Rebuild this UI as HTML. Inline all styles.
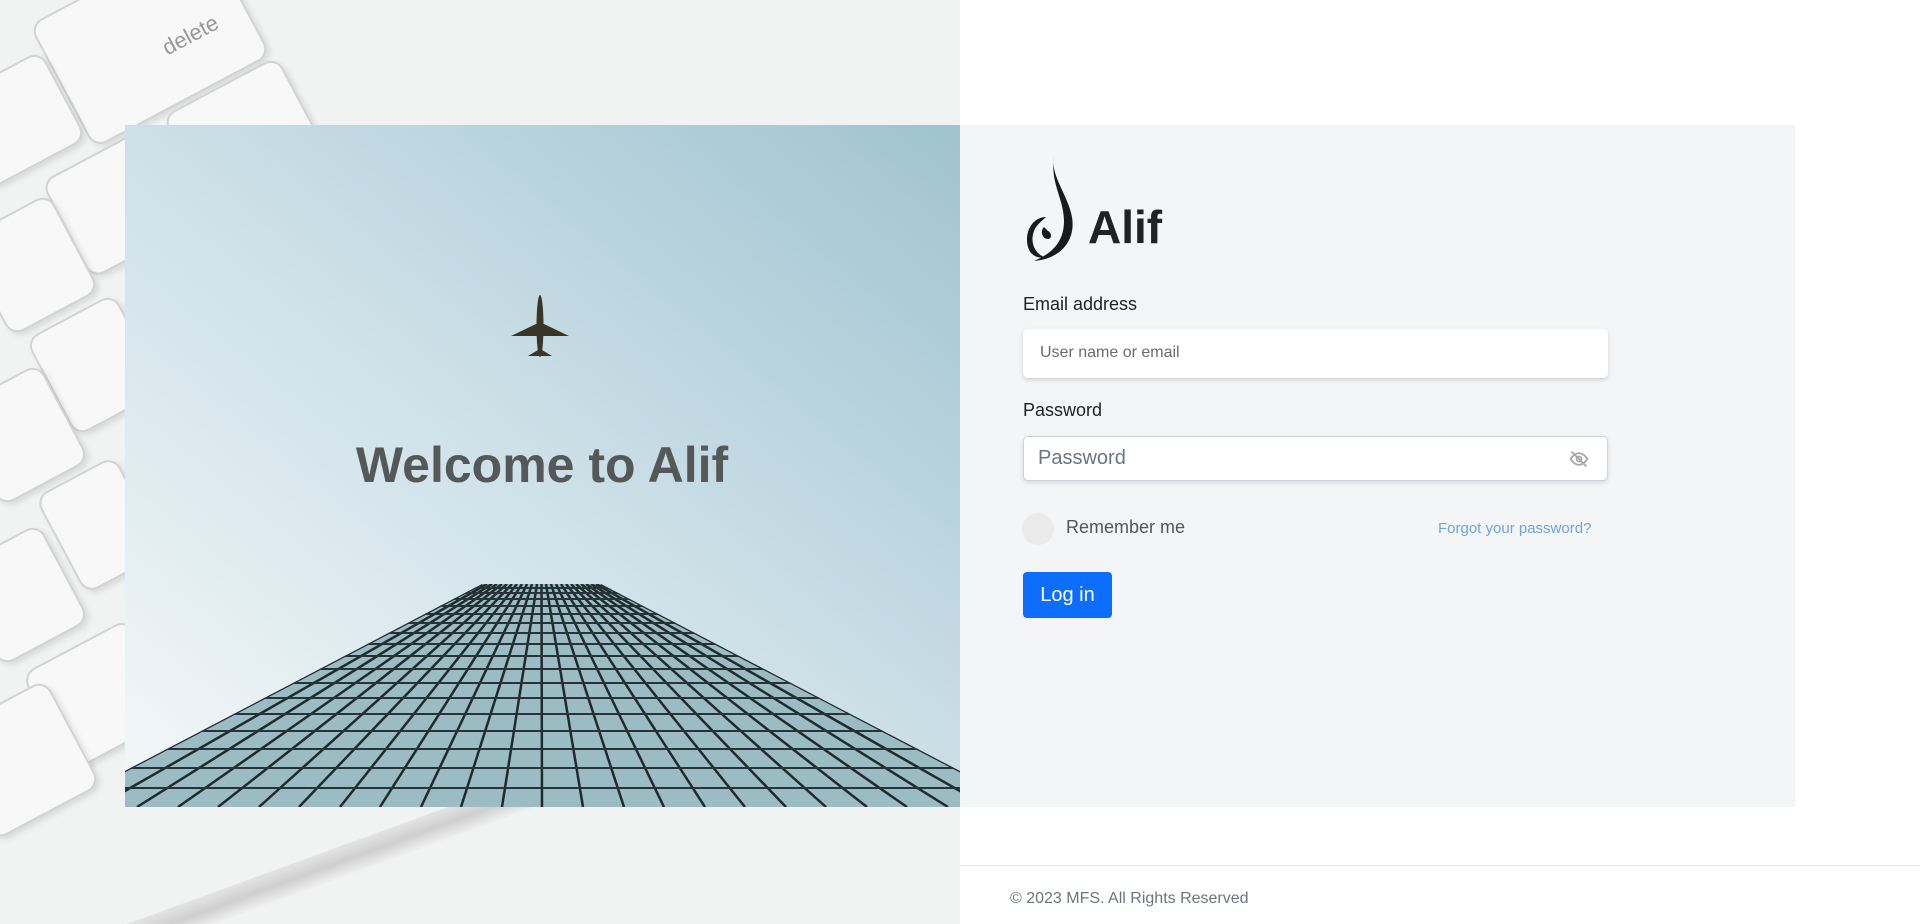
<!DOCTYPE html>
<html><head><meta charset="utf-8">
<style>
*{margin:0;padding:0;box-sizing:border-box}
html,body{width:1920px;height:924px;overflow:hidden}
body{background:#fff;font-family:"Liberation Sans",sans-serif;position:relative}
.left{position:absolute;left:0;top:0;width:960px;height:924px;background:#f1f2f2;overflow:hidden}
.key{position:absolute;background:#f8f8f8;border:2px solid #d2d4d4;border-radius:14px;box-shadow:2px 4px 6px rgba(0,0,0,.10)}
.photo{position:absolute;left:125px;top:125px;width:835px;height:682px}
.panel{position:absolute;left:960px;top:125px;width:835px;height:682px;background:#f4f5f7}
.lbl{position:absolute;left:1023px;font-size:18px;color:#222}
.inp{position:absolute;left:1023px;width:585px;background:#fff;border-radius:5px}
.footer{position:absolute;left:960px;top:865px;width:960px;border-top:1px solid #e6e6e6;height:58px}
</style></head><body>
<div class="left">
  <div class="key" style="left:50px;top:-30px;width:200px;height:140px;transform:rotate(-28deg)"><span style="position:absolute;right:30px;bottom:40px;color:#999;font-size:22px">delete</span></div>
  <div class="key" style="left:-40px;top:70px;width:110px;height:100px;transform:rotate(-28deg)"></div>
  <div class="key" style="left:180px;top:80px;width:130px;height:110px;transform:rotate(-28deg)"></div>
  <div class="key" style="left:60px;top:150px;width:110px;height:110px;transform:rotate(-28deg)"></div>
  <div class="key" style="left:-20px;top:210px;width:100px;height:110px;transform:rotate(-28deg)"></div>
  <div class="key" style="left:45px;top:310px;width:100px;height:110px;transform:rotate(-28deg)"></div>
  <div class="key" style="left:-30px;top:380px;width:100px;height:110px;transform:rotate(-28deg)"></div>
  <div class="key" style="left:55px;top:470px;width:90px;height:110px;transform:rotate(-28deg)"></div>
  <div class="key" style="left:-30px;top:540px;width:100px;height:110px;transform:rotate(-28deg)"></div>
  <div class="key" style="left:40px;top:640px;width:120px;height:110px;transform:rotate(-28deg)"></div>
  <div class="key" style="left:-40px;top:700px;width:120px;height:120px;transform:rotate(-28deg)"></div>
  <div style="position:absolute;left:60px;top:840px;width:600px;height:30px;background:linear-gradient(#e4e4e4,#cfcfcf,#f0f0f0);transform:rotate(-20deg)"></div>
</div>
<svg class="photo" viewBox="0 0 835 682">
<defs>
<linearGradient id="sky" x1="1" y1="0" x2="0" y2="1">
<stop offset="0" stop-color="#9fc3d0"/><stop offset="0.5" stop-color="#cde0e8"/><stop offset="1" stop-color="#f4f8fa"/></linearGradient>
<clipPath id="bld"><polygon points="357,459 476,459 904,682 -69,682"/></clipPath>
</defs>
<rect width="835" height="682" fill="url(#sky)"/>
<g clip-path="url(#bld)">
<rect x="-69" y="459" width="980" height="223" fill="#9bbcc3"/>
<g stroke="#1f2a2d" stroke-width="2.5">
<line x1="357" y1="459" x2="-69" y2="682"/><line x1="362" y1="459" x2="-28" y2="682"/><line x1="367" y1="459" x2="12" y2="682"/><line x1="372" y1="459" x2="53" y2="682"/><line x1="377" y1="459" x2="93" y2="682"/><line x1="382" y1="459" x2="134" y2="682"/><line x1="387" y1="459" x2="174" y2="682"/><line x1="392" y1="459" x2="215" y2="682"/><line x1="397" y1="459" x2="255" y2="682"/><line x1="402" y1="459" x2="296" y2="682"/><line x1="407" y1="459" x2="336" y2="682"/><line x1="412" y1="459" x2="377" y2="682"/><line x1="416.5" y1="459" x2="417" y2="682"/><line x1="421" y1="459" x2="458" y2="682"/><line x1="426" y1="459" x2="499" y2="682"/><line x1="431" y1="459" x2="539" y2="682"/><line x1="436" y1="459" x2="580" y2="682"/><line x1="441" y1="459" x2="620" y2="682"/><line x1="446" y1="459" x2="661" y2="682"/><line x1="451" y1="459" x2="701" y2="682"/><line x1="456" y1="459" x2="742" y2="682"/><line x1="461" y1="459" x2="782" y2="682"/><line x1="466" y1="459" x2="823" y2="682"/><line x1="471" y1="459" x2="863" y2="682"/><line x1="476" y1="459" x2="904" y2="682"/>
</g>
<g stroke="#26343a" stroke-width="2">
<line x1="-69" x2="904" y1="463" y2="463"/><line x1="-69" x2="904" y1="468" y2="468"/><line x1="-69" x2="904" y1="474" y2="474"/><line x1="-69" x2="904" y1="481" y2="481"/><line x1="-69" x2="904" y1="489" y2="489"/><line x1="-69" x2="904" y1="498" y2="498"/><line x1="-69" x2="904" y1="508" y2="508"/><line x1="-69" x2="904" y1="519" y2="519"/><line x1="-69" x2="904" y1="531" y2="531"/><line x1="-69" x2="904" y1="544" y2="544"/><line x1="-69" x2="904" y1="558" y2="558"/><line x1="-69" x2="904" y1="573" y2="573"/><line x1="-69" x2="904" y1="589" y2="589"/><line x1="-69" x2="904" y1="606" y2="606"/><line x1="-69" x2="904" y1="624" y2="624"/><line x1="-69" x2="904" y1="643" y2="643"/><line x1="-69" x2="904" y1="663" y2="663"/>
</g>
</g>
<g fill="#3a3526" transform="translate(415,201)">
<ellipse cx="0" cy="0" rx="3.5" ry="31"/>
<polygon points="-29,10 29,10 4,-2 -4,-2"/>
<polygon points="-12,30 12,30 2,24 -2,24"/>
</g>
<text x="417" y="357" text-anchor="middle" font-family="Liberation Sans,sans-serif" font-weight="bold" font-size="50" fill="#555859">Welcome to Alif</text>
</svg>
<div class="panel"></div>
<svg style="position:absolute;left:1020px;top:155px" width="60" height="108" viewBox="0 0 60 108">
<path d="M34 2 C30 20 48 40 52 62 C56 86 40 104 14 106 C28 100 44 90 44 66 C44 44 30 28 34 2Z" fill="#1a1a1a"/>
<path d="M26 62 C12 62 4 78 8 92 C10 100 18 104 24 102 C14 98 10 86 14 76 C16 70 22 66 26 62Z" fill="#1a1a1a"/>
<path d="M24 72 C20 76 22 84 28 84 C32 84 32 78 28 76Z" fill="#1a1a1a"/>
</svg>
<div style="position:absolute;left:1088px;top:200px;font-size:46px;font-weight:bold;color:#222">Alif</div>
<div class="lbl" style="top:294px">Email address</div>
<div class="inp" style="top:329px;height:49px;box-shadow:0 2px 5px rgba(0,0,0,.15)"><span style="position:absolute;left:17px;top:15px;font-size:16px;color:#6c6c6c">User name or email</span></div>
<div class="lbl" style="top:400px">Password</div>
<div class="inp" style="top:436px;height:45px;border:1px solid #ced4da;box-shadow:0 2px 5px rgba(0,0,0,.12)"><span style="position:absolute;left:14px;top:10px;font-size:20px;color:#6c757d">Password</span>
<svg style="position:absolute;left:544px;top:12px" width="22" height="20" viewBox="0 0 24 24" fill="none" stroke="#aaa" stroke-width="2.2"><path d="M2 12s4-7 10-7 10 7 10 7-4 7-10 7S2 12 2 12z"/><circle cx="12" cy="12" r="3"/><line x1="3" y1="3" x2="21" y2="21"/></svg></div>
<div style="position:absolute;left:1022px;top:513px;width:32px;height:32px;border-radius:50%;background:#ebebeb"></div>
<div style="position:absolute;left:1066px;top:517px;font-size:18px;color:#555">Remember me</div>
<div style="position:absolute;left:1438px;top:520px;font-size:15px;color:#6fa6dc">Forgot your password?</div>
<div style="position:absolute;left:1023px;top:572px;width:89px;height:46px;background:#0d6efd;border-radius:4px;color:#fff;font-size:20px;line-height:46px;text-align:center">Log in</div>
<div class="footer"><span style="position:absolute;left:50px;top:24px;font-size:16px;color:#6c757d">© 2023 MFS. All Rights Reserved</span></div>
</body></html>
